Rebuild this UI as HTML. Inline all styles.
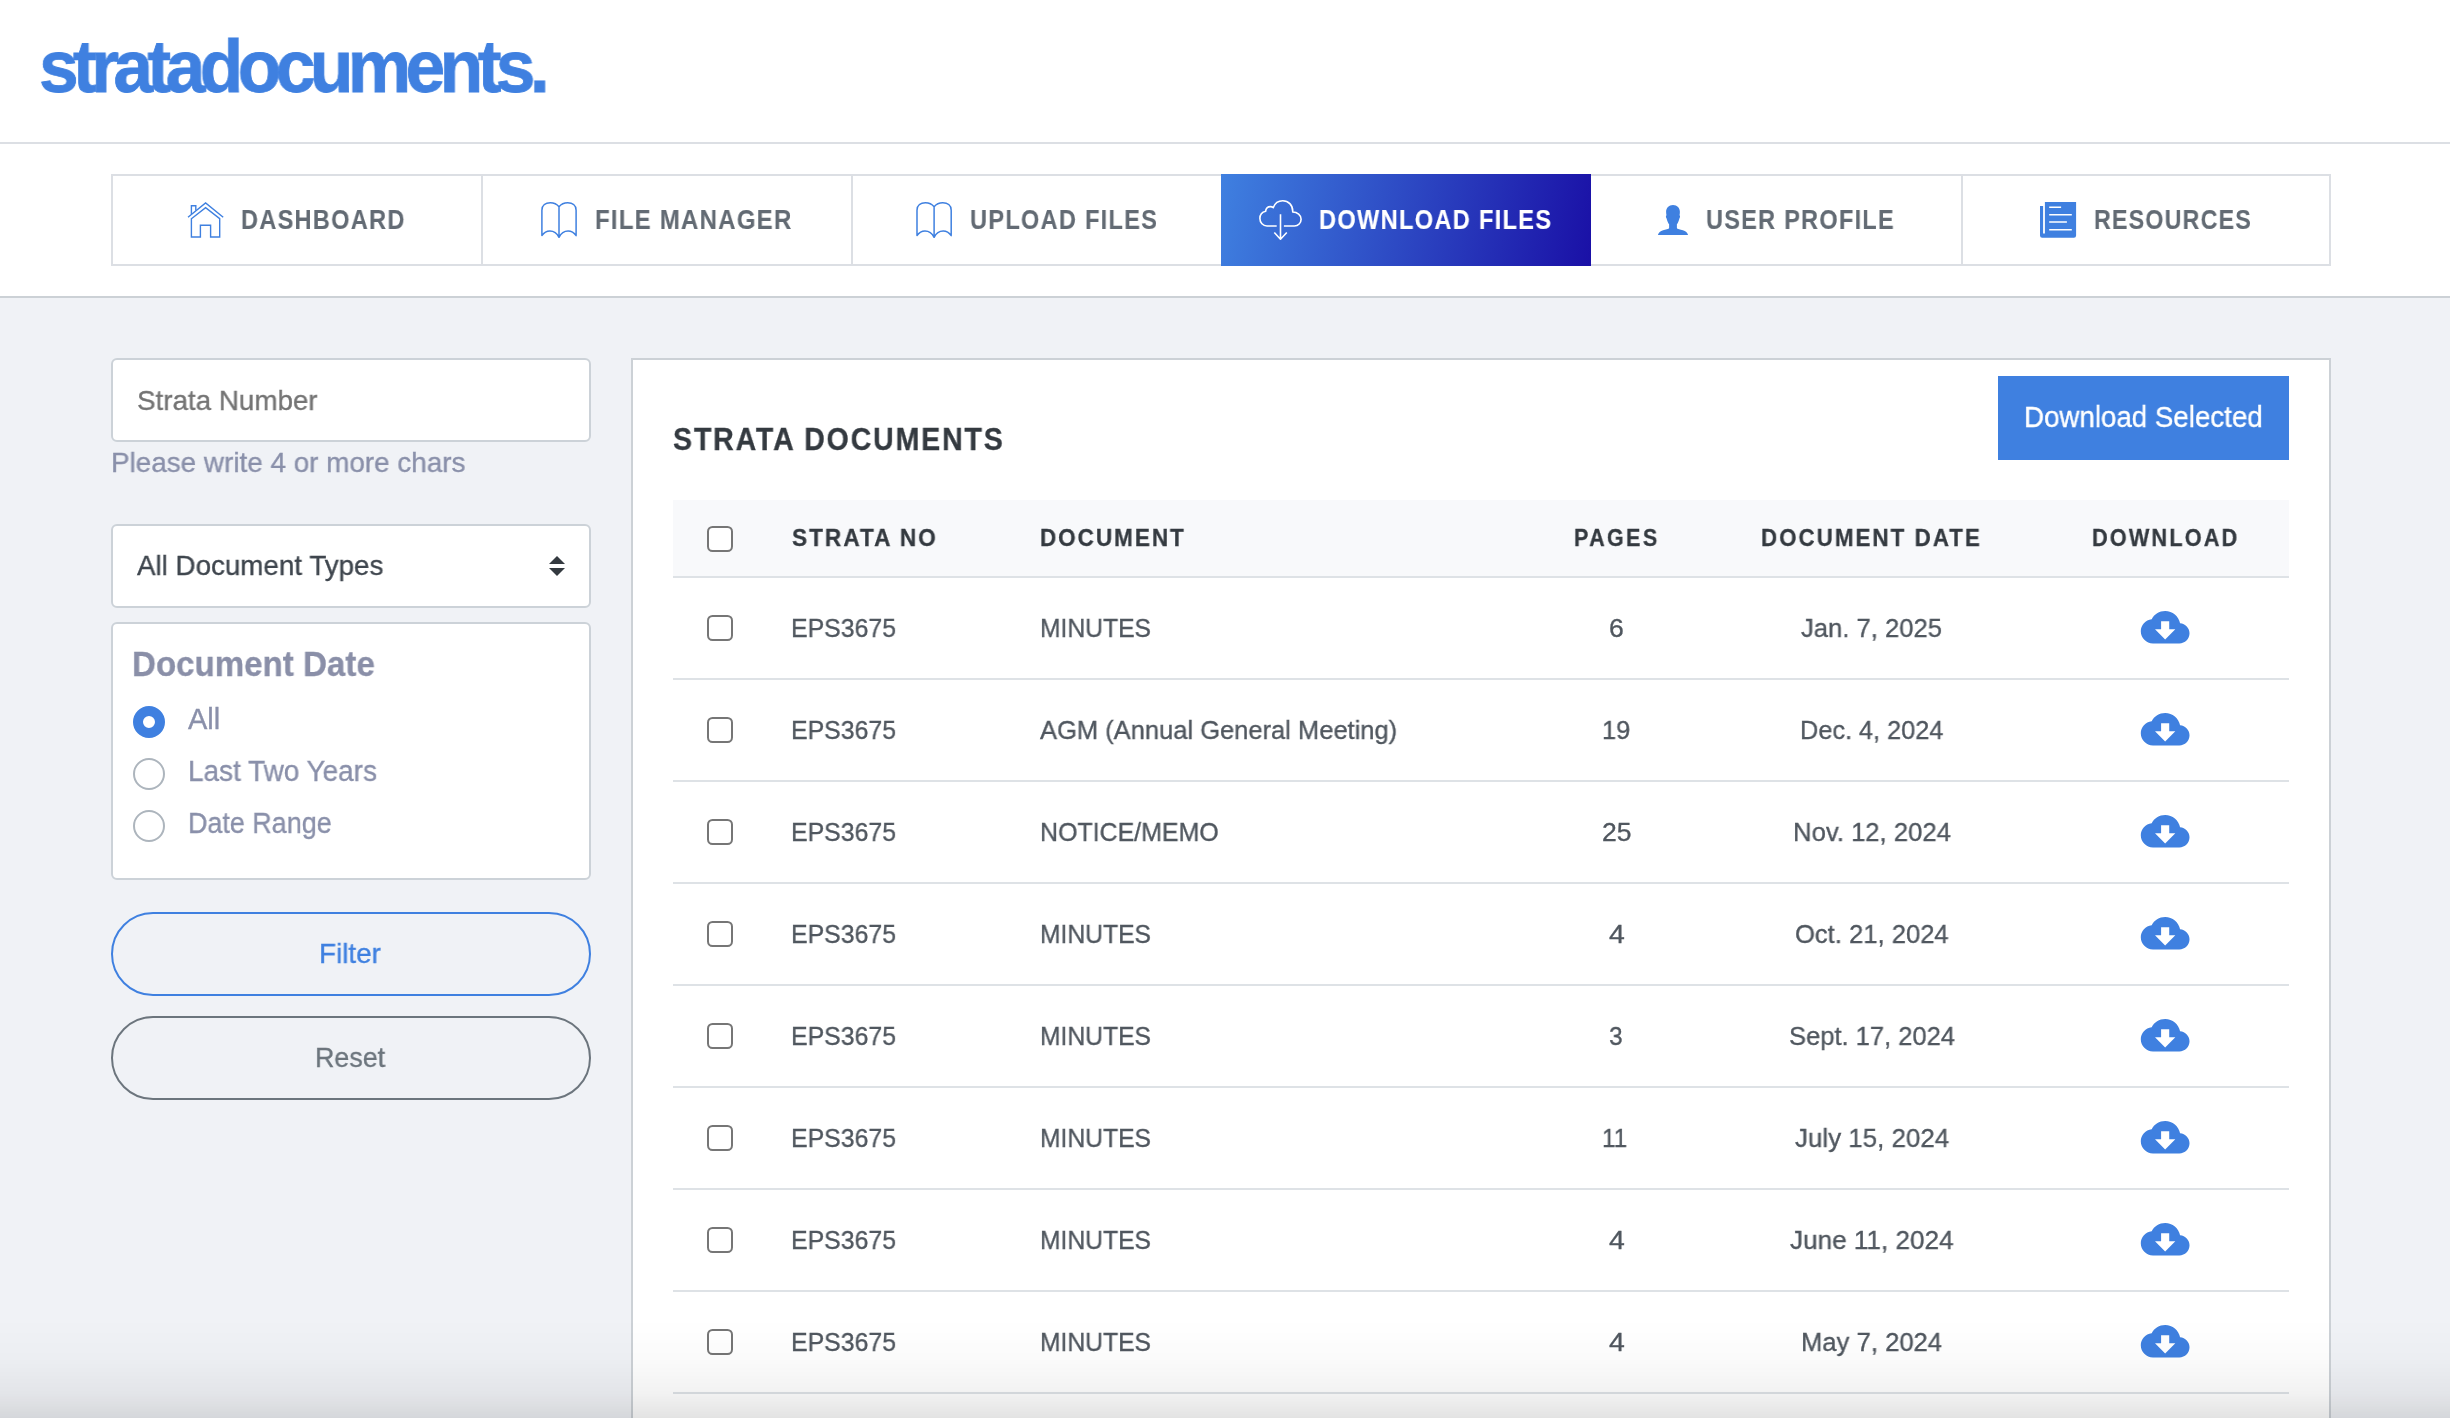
<!DOCTYPE html>
<html lang="en">
<head>
<meta charset="utf-8">
<title>stratadocuments. - Download Files</title>
<style>
*{box-sizing:border-box;margin:0;padding:0}
html,body{width:2450px;height:1418px;overflow:hidden}
body{position:relative;background:#f0f2f6;font-family:"Liberation Sans",Arial,sans-serif;color:#495057}
.a{position:absolute}
.t{position:absolute;white-space:nowrap;line-height:1;transform-origin:0 0;will-change:transform}
#header{left:0;top:0;width:2450px;height:144px;background:#fff;border-bottom:2px solid #dcdfe4}
#navwrap{left:0;top:144px;width:2450px;height:154px;background:#fff;border-bottom:2px solid #ccd1d6}
#nav{left:111px;top:174px;width:2220px;height:92px;border:2px solid #dcdfe4;background:#fff}
.sep{position:absolute;top:176px;width:2px;height:88px;background:#dcdfe4}
#active{left:1221px;top:174px;width:370px;height:92px;background:linear-gradient(100deg,#3f80e0 0%,#1a10a6 100%)}
.box{position:absolute;left:111px;width:480px;background:#fff;border:2px solid #ccd2d8;border-radius:6px}
.pill{position:absolute;left:111px;width:480px;height:84px;border-radius:42px;border:2px solid #3f80e0}
.radio{position:absolute;left:133px;width:32px;height:32px;border-radius:50%;border:2px solid #adb5bd;background:#fff}
.radio.on{border:10px solid #3f80e0}
#card{left:631px;top:358px;width:1700px;height:1100px;background:#fff;border:2px solid #ccd1d6}
#thead{left:673px;top:500px;width:1616px;height:76px;background:#f8f9fb}
.hl{position:absolute;left:673px;width:1616px;height:2px;background:#dee2e6}
.cb{position:absolute;left:707px;width:26px;height:26px;border:2px solid #767676;border-radius:5.5px;background:#fff}
#btn{left:1998px;top:376px;width:291px;height:84px;background:#3f80e0}
#shade{left:0;top:1318px;width:2450px;height:100px;background:linear-gradient(180deg,rgba(0,0,0,0) 0%,rgba(0,0,0,0.015) 40%,rgba(0,0,0,0.05) 75%,rgba(0,0,0,0.11) 100%)}
#icons{left:0;top:0;width:2450px;height:1418px}
</style>
</head>
<body>
<div id="header" class="a"></div>
<div id="navwrap" class="a"></div>
<div id="nav" class="a"></div>
<div class="sep" style="left:481px"></div>
<div class="sep" style="left:851px"></div>
<div class="sep" style="left:1961px"></div>
<div id="active" class="a"></div>
<div class="box" style="top:358px;height:84px"></div>
<div class="box" style="top:524px;height:84px"></div>
<div class="box" style="top:622px;height:258px"></div>
<div class="radio on" style="top:706px"></div>
<div class="radio" style="top:758px"></div>
<div class="radio" style="top:810px"></div>
<div class="pill" style="top:912px"></div>
<div class="pill" style="top:1016px;border-color:#6c757d"></div>
<div id="card" class="a"></div>
<div id="btn" class="a"></div>
<div id="thead" class="a"></div>
<div class="hl" style="top:576px"></div>
<div class="hl" style="top:678px"></div>
<div class="hl" style="top:780px"></div>
<div class="hl" style="top:882px"></div>
<div class="hl" style="top:984px"></div>
<div class="hl" style="top:1086px"></div>
<div class="hl" style="top:1188px"></div>
<div class="hl" style="top:1290px"></div>
<div class="hl" style="top:1392px"></div>
<div class="cb" style="top:526px"></div>
<div class="cb" style="top:615px"></div>
<div class="cb" style="top:717px"></div>
<div class="cb" style="top:819px"></div>
<div class="cb" style="top:921px"></div>
<div class="cb" style="top:1023px"></div>
<div class="cb" style="top:1125px"></div>
<div class="cb" style="top:1227px"></div>
<div class="cb" style="top:1329px"></div>
<svg id="icons" class="a" width="2450" height="1418" viewBox="0 0 2450 1418">
<defs><path id="cd" d="M19.35 10.04C18.67 6.59 15.64 4 12 4 9.11 4 6.6 5.64 5.35 8.04 2.34 8.36 0 10.91 0 14c0 3.31 2.69 6 6 6h13c2.76 0 5-2.24 5-5 0-2.64-2.05-4.78-4.65-4.96zM17 13l-5 5-5-5h3V9h4v4h3z"/>
<g id="book" fill="none" stroke="#3f80e0" stroke-width="1.5" stroke-linejoin="round" stroke-linecap="round"><path d="M0,206.8 C-2.4,203.8 -5.4,202.8 -8.7,202.8 C-13.4,202.8 -17.1,205.4 -17.1,210.2 L-17.1,235.6 C-15,232.5 -12.4,230.9 -9.1,230.9 C-5,230.9 -1.8,233.6 0,237.3 C1.8,233.6 5,230.9 9.1,230.9 C12.4,230.9 15,232.5 17.1,235.6 L17.1,210.2 C17.1,205.4 13.4,202.8 8.7,202.8 C5.4,202.8 2.4,203.8 0,206.8 L0,237.3"/></g>
</defs>
<g fill="none" stroke="#3f80e0" stroke-width="1.4">
<path d="M188,217.2 L205.6,202.9 L223.2,217.2"/>
<path d="M191.4,218.7 L205.6,207.7 L219.7,218.7 V237 H210.6 V225.3 H200.4 V237 H191.4 Z"/>
<path d="M191.4,214 V205.7 H195.8 V210.4"/>
</g>
<use href="#book" x="559"/>
<use href="#book" x="934.1"/>
<g fill="none" stroke="#ffffff" stroke-width="1.6" stroke-linecap="butt" stroke-linejoin="round">
<path d="M1276.7,226 L1267,226 C1263,226 1259.9,222.6 1259.9,218.4 C1259.9,214.8 1262.2,212 1265.7,211.2 C1265.6,208.4 1267.8,206.6 1270.3,206.6 C1271.4,206.6 1272.5,206.9 1273.3,207.6 C1274.8,203.4 1278.4,200.7 1282.8,200.7 C1288.4,200.7 1292.7,205.2 1292.7,211 L1292.7,212 C1297.4,212 1301.1,215.2 1301.1,219.2 C1301.1,223 1298.2,226 1294.4,226 L1283.9,226"/>
<path d="M1280.5,214.3 V239 M1274.3,232.5 L1280.5,239.2 L1286.8,232.5"/>
</g>
<g fill="#3f80e0">
<path d="M1673,205 C1677.2,205 1679.9,208 1679.9,211.8 C1679.9,213.2 1679.7,214.4 1679.5,215.3 C1680.3,215.6 1680.3,217.2 1679.4,218.4 C1678.8,220.6 1678,222.8 1676.9,224.3 L1676.9,228 C1677.2,229.2 1680.5,229.6 1682.9,230.3 C1685.6,231.2 1687.6,232.8 1688.1,235 L1657.9,235 C1658.4,232.8 1660.4,231.2 1663.1,230.3 C1665.5,229.6 1668.8,229.2 1669.1,228 L1669.1,224.3 C1668,222.8 1667.2,220.6 1666.6,218.4 C1665.7,217.2 1665.7,215.6 1666.5,215.3 C1666.3,214.4 1666.1,213.2 1666.1,211.8 C1666.1,208 1668.8,205 1673,205 Z"/>
</g>
<g fill="#3f80e0">
<path d="M2044.9,202 H2076.1 V235.6 Q2076.1,237.8 2073.9,237.8 H2042.2 Q2040,237.8 2040,235.6 V206 H2043.1 V233.6 H2044.9 Z"/>
</g>
<g stroke="#ffffff" stroke-width="1.5">
<path d="M2049.2,207.2 H2061.1 M2049.2,214.8 H2071.8 M2049.2,222.1 H2066.9 M2049.2,229.8 H2071.8"/>
</g>
<path fill="#343a40" d="M549,564.1 L557,555.9 L565,564.1 Z M549,568 L565,568 L557,576 Z"/>
<use href="#cd" fill="#3f80e0" transform="translate(2140.8,602.9) scale(2.03)"/>
<use href="#cd" fill="#3f80e0" transform="translate(2140.8,704.9) scale(2.03)"/>
<use href="#cd" fill="#3f80e0" transform="translate(2140.8,806.9) scale(2.03)"/>
<use href="#cd" fill="#3f80e0" transform="translate(2140.8,908.9) scale(2.03)"/>
<use href="#cd" fill="#3f80e0" transform="translate(2140.8,1010.9) scale(2.03)"/>
<use href="#cd" fill="#3f80e0" transform="translate(2140.8,1112.9) scale(2.03)"/>
<use href="#cd" fill="#3f80e0" transform="translate(2140.8,1214.9) scale(2.03)"/>
<use href="#cd" fill="#3f80e0" transform="translate(2140.8,1316.9) scale(2.03)"/>
</svg>
<div class="t" style="left:38.50px;top:28.50px;font-size:75px;font-weight:700;color:#3f80e0;letter-spacing:-5.866px;transform:scaleX(0.9507);-webkit-text-stroke:0.8px #3f80e0">stratadocuments.</div>
<div class="t" style="left:241.43px;top:206.54px;font-size:27px;font-weight:700;color:#636b74;letter-spacing:1.455px;transform:scaleX(0.8727);-webkit-text-stroke:0.12px #636b74">DASHBOARD</div>
<div class="t" style="left:595.01px;top:206.54px;font-size:27px;font-weight:700;color:#636b74;letter-spacing:1.353px;transform:scaleX(0.8905);-webkit-text-stroke:0.12px #636b74">FILE MANAGER</div>
<div class="t" style="left:969.73px;top:206.54px;font-size:27px;font-weight:700;color:#636b74;letter-spacing:1.447px;transform:scaleX(0.8735);-webkit-text-stroke:0.12px #636b74">UPLOAD FILES</div>
<div class="t" style="left:1319.23px;top:206.54px;font-size:27px;font-weight:700;color:#ffffff;letter-spacing:1.494px;transform:scaleX(0.8740);-webkit-text-stroke:0.12px #ffffff">DOWNLOAD FILES</div>
<div class="t" style="left:1705.63px;top:206.54px;font-size:27px;font-weight:700;color:#636b74;letter-spacing:1.432px;transform:scaleX(0.8717);-webkit-text-stroke:0.12px #636b74">USER PROFILE</div>
<div class="t" style="left:2093.84px;top:206.54px;font-size:27px;font-weight:700;color:#636b74;letter-spacing:1.357px;transform:scaleX(0.8617);-webkit-text-stroke:0.12px #636b74">RESOURCES</div>
<div class="t" style="left:136.93px;top:385.97px;font-size:28.5px;font-weight:400;color:#747474;transform:scaleX(0.9744);-webkit-text-stroke:0.35px #747474">Strata Number</div>
<div class="t" style="left:110.75px;top:448.17px;font-size:28.5px;font-weight:400;color:#8a90aa;transform:scaleX(0.9771);-webkit-text-stroke:0.35px #8a90aa">Please write 4 or more chars</div>
<div class="t" style="left:137.10px;top:551.17px;font-size:28.5px;font-weight:400;color:#3f464e;transform:scaleX(0.9740);-webkit-text-stroke:0.35px #3f464e">All Document Types</div>
<div class="t" style="left:132.44px;top:647.15px;font-size:35.5px;font-weight:700;color:#8a8fa8;transform:scaleX(0.9323);-webkit-text-stroke:0.3px #8a8fa8">Document Date</div>
<div class="t" style="left:187.90px;top:704.72px;font-size:28.8px;font-weight:400;color:#8a90aa;transform:scaleX(1.0064);-webkit-text-stroke:0.35px #8a90aa">All</div>
<div class="t" style="left:187.56px;top:756.72px;font-size:28.8px;font-weight:400;color:#8a90aa;transform:scaleX(0.9699);-webkit-text-stroke:0.35px #8a90aa">Last Two Years</div>
<div class="t" style="left:187.63px;top:808.52px;font-size:28.8px;font-weight:400;color:#8a90aa;transform:scaleX(0.9345);-webkit-text-stroke:0.35px #8a90aa">Date Range</div>
<div class="t" style="left:319.24px;top:939.17px;font-size:28.5px;font-weight:400;color:#3f80e0;transform:scaleX(0.9783);-webkit-text-stroke:0.35px #3f80e0">Filter</div>
<div class="t" style="left:315.22px;top:1043.27px;font-size:28.5px;font-weight:400;color:#6c757d;transform:scaleX(0.9416);-webkit-text-stroke:0.35px #6c757d">Reset</div>
<div class="t" style="left:672.60px;top:424.16px;font-size:31px;font-weight:700;color:#343a40;letter-spacing:1.985px;transform:scaleX(0.9208);-webkit-text-stroke:0.3px #343a40">STRATA DOCUMENTS</div>
<div class="t" style="left:2024.39px;top:402.65px;font-size:29px;font-weight:400;color:#ffffff;transform:scaleX(0.9552);-webkit-text-stroke:0.35px #ffffff">Download Selected</div>
<div class="t" style="left:792.00px;top:525.80px;font-size:24.8px;font-weight:700;color:#343a40;letter-spacing:2.185px;transform:scaleX(0.9124);-webkit-text-stroke:0.3px #343a40">STRATA NO</div>
<div class="t" style="left:1039.69px;top:525.80px;font-size:24.8px;font-weight:700;color:#343a40;letter-spacing:2.196px;transform:scaleX(0.9061);-webkit-text-stroke:0.3px #343a40">DOCUMENT</div>
<div class="t" style="left:1574.23px;top:525.80px;font-size:24.8px;font-weight:700;color:#343a40;letter-spacing:2.737px;transform:scaleX(0.8667);-webkit-text-stroke:0.3px #343a40">PAGES</div>
<div class="t" style="left:1761.20px;top:525.80px;font-size:24.8px;font-weight:700;color:#343a40;letter-spacing:2.317px;transform:scaleX(0.8985);-webkit-text-stroke:0.3px #343a40">DOCUMENT DATE</div>
<div class="t" style="left:2091.92px;top:525.80px;font-size:24.8px;font-weight:700;color:#343a40;letter-spacing:2.422px;transform:scaleX(0.8766);-webkit-text-stroke:0.3px #343a40">DOWNLOAD</div>
<div class="t" style="left:790.72px;top:614.87px;font-size:26.5px;font-weight:400;color:#50575f;transform:scaleX(0.9379);-webkit-text-stroke:0.35px #50575f">EPS3675</div>
<div class="t" style="left:1039.94px;top:614.87px;font-size:26.5px;font-weight:400;color:#50575f;transform:scaleX(0.9305);-webkit-text-stroke:0.35px #50575f">MINUTES</div>
<div class="t" style="left:1609.19px;top:614.87px;font-size:26.5px;font-weight:400;color:#50575f;transform:scaleX(1.0000);-webkit-text-stroke:0.35px #50575f">6</div>
<div class="t" style="left:1800.61px;top:614.87px;font-size:26.5px;font-weight:400;color:#50575f;transform:scaleX(0.9658);-webkit-text-stroke:0.35px #50575f">Jan. 7, 2025</div>
<div class="t" style="left:790.72px;top:716.87px;font-size:26.5px;font-weight:400;color:#50575f;transform:scaleX(0.9379);-webkit-text-stroke:0.35px #50575f">EPS3675</div>
<div class="t" style="left:1039.80px;top:716.87px;font-size:26.5px;font-weight:400;color:#50575f;transform:scaleX(0.9624);-webkit-text-stroke:0.35px #50575f">AGM (Annual General Meeting)</div>
<div class="t" style="left:1601.97px;top:716.87px;font-size:26.5px;font-weight:400;color:#50575f;transform:scaleX(0.9579);-webkit-text-stroke:0.35px #50575f">19</div>
<div class="t" style="left:1799.90px;top:716.87px;font-size:26.5px;font-weight:400;color:#50575f;transform:scaleX(0.9542);-webkit-text-stroke:0.35px #50575f">Dec. 4, 2024</div>
<div class="t" style="left:790.72px;top:818.87px;font-size:26.5px;font-weight:400;color:#50575f;transform:scaleX(0.9379);-webkit-text-stroke:0.35px #50575f">EPS3675</div>
<div class="t" style="left:1039.92px;top:818.87px;font-size:26.5px;font-weight:400;color:#50575f;transform:scaleX(0.9412);-webkit-text-stroke:0.35px #50575f">NOTICE/MEMO</div>
<div class="t" style="left:1601.89px;top:818.87px;font-size:26.5px;font-weight:400;color:#50575f;transform:scaleX(0.9955);-webkit-text-stroke:0.35px #50575f">25</div>
<div class="t" style="left:1792.58px;top:818.87px;font-size:26.5px;font-weight:400;color:#50575f;transform:scaleX(0.9691);-webkit-text-stroke:0.35px #50575f">Nov. 12, 2024</div>
<div class="t" style="left:790.72px;top:920.87px;font-size:26.5px;font-weight:400;color:#50575f;transform:scaleX(0.9379);-webkit-text-stroke:0.35px #50575f">EPS3675</div>
<div class="t" style="left:1039.94px;top:920.87px;font-size:26.5px;font-weight:400;color:#50575f;transform:scaleX(0.9305);-webkit-text-stroke:0.35px #50575f">MINUTES</div>
<div class="t" style="left:1609.19px;top:920.87px;font-size:26.5px;font-weight:400;color:#50575f;transform:scaleX(1.0714);-webkit-text-stroke:0.35px #50575f">4</div>
<div class="t" style="left:1794.76px;top:920.87px;font-size:26.5px;font-weight:400;color:#50575f;transform:scaleX(0.9655);-webkit-text-stroke:0.35px #50575f">Oct. 21, 2024</div>
<div class="t" style="left:790.72px;top:1022.87px;font-size:26.5px;font-weight:400;color:#50575f;transform:scaleX(0.9379);-webkit-text-stroke:0.35px #50575f">EPS3675</div>
<div class="t" style="left:1039.94px;top:1022.87px;font-size:26.5px;font-weight:400;color:#50575f;transform:scaleX(0.9305);-webkit-text-stroke:0.35px #50575f">MINUTES</div>
<div class="t" style="left:1609.27px;top:1022.87px;font-size:26.5px;font-weight:400;color:#50575f;transform:scaleX(0.9231);-webkit-text-stroke:0.35px #50575f">3</div>
<div class="t" style="left:1788.60px;top:1022.87px;font-size:26.5px;font-weight:400;color:#50575f;transform:scaleX(0.9625);-webkit-text-stroke:0.35px #50575f">Sept. 17, 2024</div>
<div class="t" style="left:790.72px;top:1124.87px;font-size:26.5px;font-weight:400;color:#50575f;transform:scaleX(0.9379);-webkit-text-stroke:0.35px #50575f">EPS3675</div>
<div class="t" style="left:1039.94px;top:1124.87px;font-size:26.5px;font-weight:400;color:#50575f;transform:scaleX(0.9305);-webkit-text-stroke:0.35px #50575f">MINUTES</div>
<div class="t" style="left:1602.06px;top:1124.87px;font-size:26.5px;font-weight:400;color:#50575f;transform:scaleX(0.9128);-webkit-text-stroke:0.35px #50575f">11</div>
<div class="t" style="left:1794.50px;top:1124.87px;font-size:26.5px;font-weight:400;color:#50575f;transform:scaleX(0.9775);-webkit-text-stroke:0.35px #50575f">July 15, 2024</div>
<div class="t" style="left:790.72px;top:1226.87px;font-size:26.5px;font-weight:400;color:#50575f;transform:scaleX(0.9379);-webkit-text-stroke:0.35px #50575f">EPS3675</div>
<div class="t" style="left:1039.94px;top:1226.87px;font-size:26.5px;font-weight:400;color:#50575f;transform:scaleX(0.9305);-webkit-text-stroke:0.35px #50575f">MINUTES</div>
<div class="t" style="left:1609.19px;top:1226.87px;font-size:26.5px;font-weight:400;color:#50575f;transform:scaleX(1.0714);-webkit-text-stroke:0.35px #50575f">4</div>
<div class="t" style="left:1789.74px;top:1226.87px;font-size:26.5px;font-weight:400;color:#50575f;transform:scaleX(0.9856);-webkit-text-stroke:0.35px #50575f">June 11, 2024</div>
<div class="t" style="left:790.72px;top:1328.87px;font-size:26.5px;font-weight:400;color:#50575f;transform:scaleX(0.9379);-webkit-text-stroke:0.35px #50575f">EPS3675</div>
<div class="t" style="left:1039.94px;top:1328.87px;font-size:26.5px;font-weight:400;color:#50575f;transform:scaleX(0.9305);-webkit-text-stroke:0.35px #50575f">MINUTES</div>
<div class="t" style="left:1609.19px;top:1328.87px;font-size:26.5px;font-weight:400;color:#50575f;transform:scaleX(1.0714);-webkit-text-stroke:0.35px #50575f">4</div>
<div class="t" style="left:1801.05px;top:1328.87px;font-size:26.5px;font-weight:400;color:#50575f;transform:scaleX(0.9673);-webkit-text-stroke:0.35px #50575f">May 7, 2024</div>
<div id="shade" class="a"></div>
</body>
</html>
